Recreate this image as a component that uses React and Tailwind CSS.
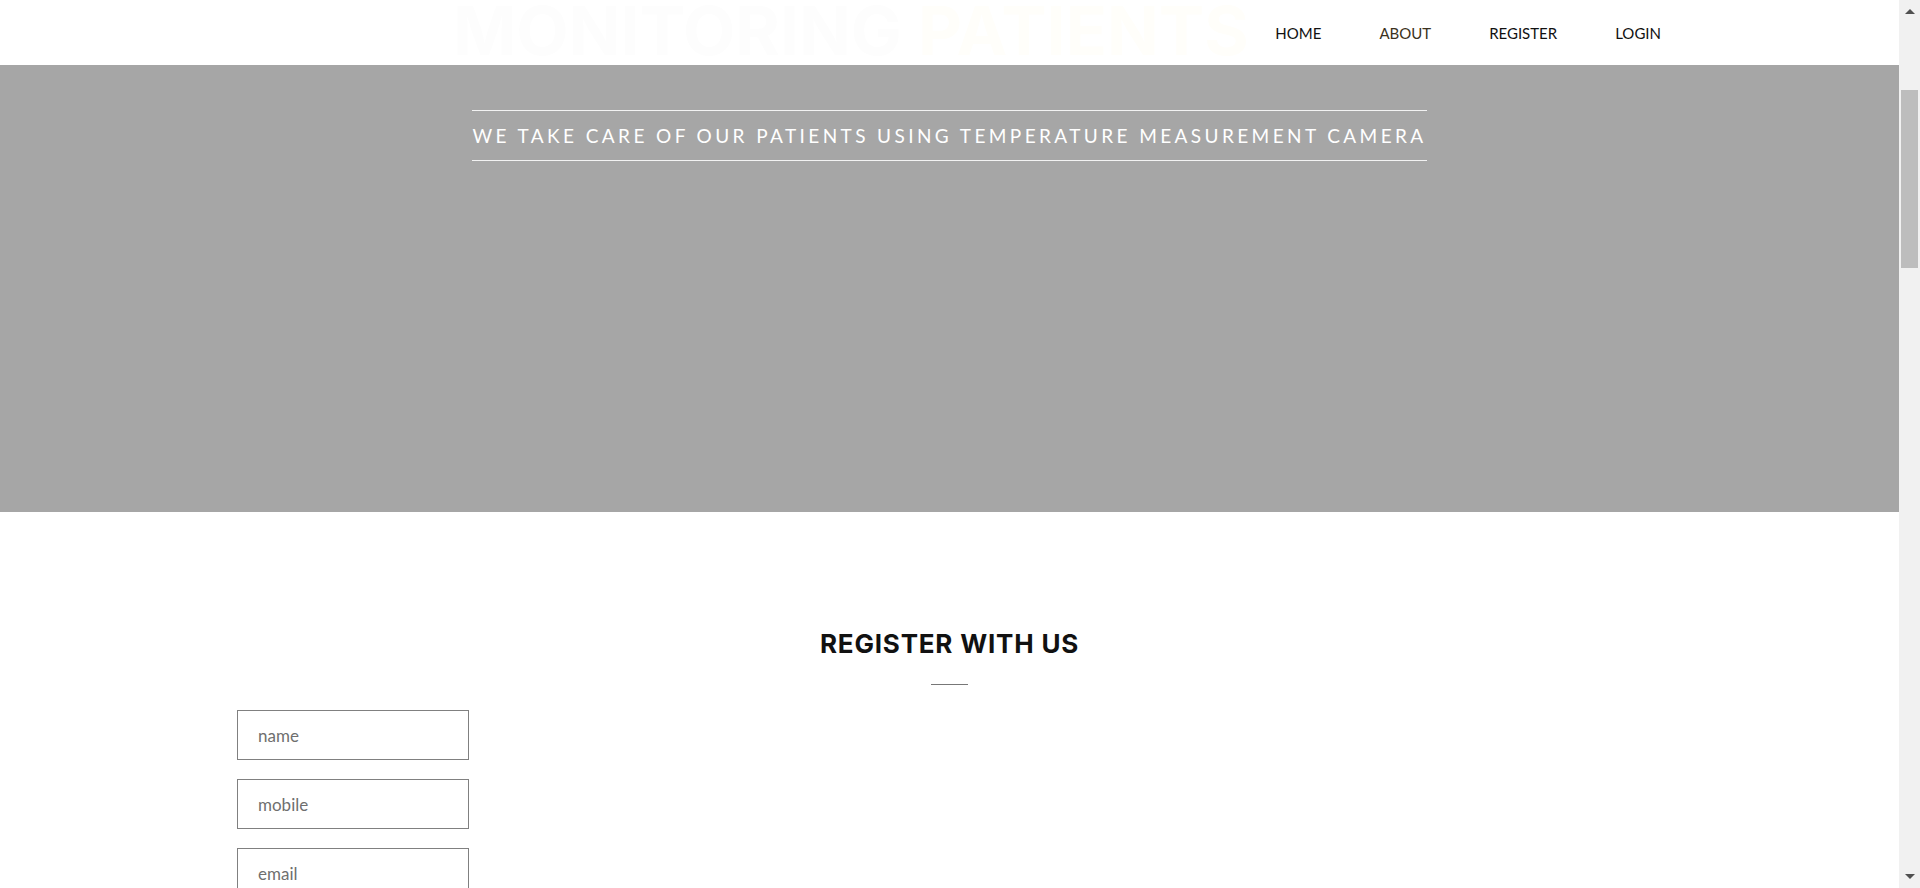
import { useState } from 'react';

const navLinks = [
  { label: 'HOME', active: false },
  { label: 'ABOUT', active: true },
  { label: 'REGISTER', active: false },
  { label: 'LOGIN', active: false },
];

const fields = ['name', 'mobile', 'email'];

function Scrollbar() {
  return (
    <div className="w-[21px] shrink-0 bg-[#f1f1f1] flex flex-col items-center">
      <div className="h-[90px] w-full flex justify-center pt-[9px]">
        <div className="w-0 h-0 border-l-[5px] border-r-[5px] border-b-[5px] border-l-transparent border-r-transparent border-b-[#505050]" />
      </div>
      <div className="w-[17px] h-[178px] bg-[#bdbdbd]" />
      <div className="flex-1" />
      <div className="h-[14px] w-full flex justify-center">
        <div className="w-0 h-0 border-l-[5px] border-r-[5px] border-t-[5px] border-l-transparent border-r-transparent border-t-[#505050]" />
      </div>
    </div>
  );
}

export default function App() {
  const [form, setForm] = useState({ name: '', mobile: '', email: '' });

  return (
    <div className="flex h-[888px] overflow-hidden bg-white font-['Lato','Liberation_Sans',sans-serif]">
      <div className="flex-1 min-w-0 flex flex-col">
        {/* ---------- Header ---------- */}
        <header className="relative h-[65px] shrink-0 bg-white overflow-hidden">
          {/* hero title sitting under the header, barely visible */}
          <div className="absolute left-[453px] top-[-4px] whitespace-nowrap font-['Inter',sans-serif] font-bold text-[68px] leading-none">
            <span className="text-[#fdfdfd]">MONITORING </span>
            <span className="text-[#fffefa]">PATIENTS</span>
          </div>
          <nav className="relative h-full flex items-center justify-end pr-[209px]">
            {navLinks.map((l) => (
              <a
                key={l.label}
                href="#"
                className={`px-[29px] pt-px text-[15px] leading-none ${l.active ? 'text-[#3b3220]' : 'text-[#111111]'}`}
              >
                {l.label}
              </a>
            ))}
          </nav>
        </header>

        {/* ---------- Hero band ---------- */}
        <section className="h-[447px] shrink-0 bg-[#a6a6a6] flex justify-center pt-[45px]">
          <div className="self-start border-y border-[#f2f2f2] h-[51px] flex items-center">
            <p className="text-[19px] leading-none tracking-[3.4px] text-white whitespace-nowrap">
              WE TAKE CARE OF OUR PATIENTS USING TEMPERATURE MEASUREMENT CAMERA
            </p>
          </div>
        </section>

        {/* ---------- Register form ---------- */}
        <section className="pt-[117px]">
          <h2 className="text-center font-['Inter',sans-serif] font-bold text-[26px] leading-[30px] tracking-[0.8px] text-[#111111]">
            REGISTER WITH US
          </h2>
          <div className="mx-auto mt-[25px] w-[37px] h-px bg-[#777777]" />
          <form className="mt-[25px] pl-[237px] flex flex-col gap-[19px]">
            {fields.map((f) => (
              <input
                key={f}
                type="text"
                placeholder={f}
                value={form[f]}
                onChange={(e) => setForm({ ...form, [f]: e.target.value })}
                className="w-[232px] h-[50px] border border-[#808080] px-[20px] text-[17px] text-[#333] placeholder:text-[#6f6f6f] outline-none"
              />
            ))}
          </form>
        </section>
      </div>
      <Scrollbar />
    </div>
  );
}
